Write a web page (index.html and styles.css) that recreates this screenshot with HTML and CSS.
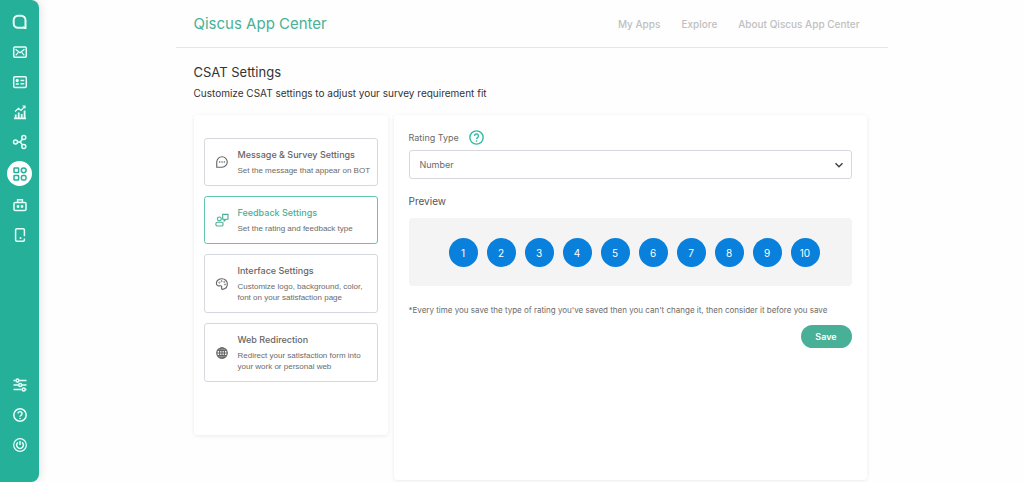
FILE: index.html
```
<!DOCTYPE html>
<html lang="en">
<head>
<meta charset="utf-8">
<meta name="viewport" content="width=device-width, initial-scale=1">
<title>Qiscus App Center</title>
<link rel="stylesheet" href="styles.css">
</head>
<body>
<div class="app">
  <nav class="sidebar" aria-label="Main">
    <div class="side-group">
      <a class="side-link" href="#" aria-label="Home"><svg viewBox="0 0 16 16"><path d="M13.500 13.800H6A4.300 4.300 0 0 1 1.700 9.500V6A4.300 4.300 0 0 1 6 1.700h3.200A4.300 4.300 0 0 1 13.500 6z" stroke-width="2"/><path d="M11 13l3 1.700" stroke-width="1.500"/></svg></a>
      <a class="side-link" href="#" aria-label="Inbox"><svg viewBox="0 0 16 16"><rect x="1.700" y="3" width="12.600" height="10.300" rx="1.200"/><path d="M3.500 5.200L8 8.800l4.500-3.600M3.700 11.300l2.600-3M12.300 11.300l-2.600-3" stroke-width="1.200"/></svg></a>
      <a class="side-link" href="#" aria-label="Contacts"><svg viewBox="0 0 16 16"><rect x="1.700" y="2.800" width="12.600" height="10.600" rx="1.200"/><circle cx="5.200" cy="6.500" r=".9" fill="currentColor"/><path d="M3.800 10h3M8.500 6.400h3.700M8.500 9.700h3.700" stroke-width="1.500"/></svg></a>
      <a class="side-link" href="#" aria-label="Analytics"><svg viewBox="0 0 16 16"><path d="M2 14.300h12M3.700 14v-3.500M6.700 14V8.500M9.700 14v-4M12.600 14V6.500" stroke-width="1.800"/><path d="M3 7.500l3.500-3.200L9 6.500l4-4.300M10.500 2H13v2.500" stroke-width="1.200"/></svg></a>
      <a class="side-link" href="#" aria-label="Integration"><svg viewBox="0 0 16 16"><circle cx="3.500" cy="8" r="2"/><circle cx="11.800" cy="3.600" r="2"/><circle cx="11.800" cy="12.400" r="2"/><path d="M5.500 8h2.700l2.200-2.800M8.200 8l2.200 2.800"/></svg></a>
      <a class="side-link side-link-active" href="#" aria-label="App Center" aria-current="page"><svg viewBox="0 0 16 16"><rect x="2" y="2" width="4.600" height="4.600" rx=".6"/><circle cx="11.700" cy="4.300" r="2.400"/><rect x="2" y="9.400" width="4.600" height="4.600" rx=".6"/><rect x="9.400" y="9.400" width="4.600" height="4.600" rx="1.600"/></svg></a>
      <a class="side-link" href="#" aria-label="Bot"><svg viewBox="0 0 16 16"><rect x="2" y="5.400" width="12" height="8" rx="1.200"/><path d="M5.600 5V2.800h4.800V5"/><path d="M5 8.400h2v2H5zM9 8.400h2v2H9z" fill="currentColor" stroke-width=".6"/></svg></a>
      <a class="side-link" href="#" aria-label="Mobile"><svg viewBox="0 0 16 16"><path d="M12.400 9.200V3a1.200 1.200 0 0 0-1.200-1.200H4.800A1.200 1.200 0 0 0 3.600 3v10a1.200 1.200 0 0 0 1.200 1.200h6.400a1.200 1.200 0 0 0 1.200-1.200v-1.500"/><circle cx="8.500" cy="11" r="1" fill="currentColor" stroke="none"/></svg></a>
    </div>
    <div class="side-group">
      <a class="side-link" href="#" aria-label="Settings"><svg viewBox="0 0 16 16"><path d="M1.500 3.600h2M7.500 3.600h7M1.500 8h4.500M10 8h4.500M1.500 12.400h8M13.500 12.400h1"/><circle cx="5.500" cy="3.600" r="1.500"/><circle cx="8.200" cy="8" r="1.500"/><circle cx="11.700" cy="12.400" r="1.500"/></svg></a>
      <a class="side-link" href="#" aria-label="Help"><svg viewBox="0 0 16 16"><circle cx="8" cy="8" r="6.200"/><path d="M6 6.500a2 2 0 1 1 3 1.800c-.7.400-1 .7-1 1.400"/><circle cx="8" cy="11.500" r=".8" fill="currentColor" stroke="none"/></svg></a>
      <a class="side-link" href="#" aria-label="Log out"><svg viewBox="0 0 16 16"><circle cx="8" cy="8" r="6.300" stroke-width="1.200"/><path d="M6 5.300a3.400 3.400 0 1 0 4 0M8 4v4"/></svg></a>
    </div>
  </nav>

  <main class="page">
    <header class="topbar">
      <a class="brand" href="#">Qiscus App Center</a>
      <nav class="topnav" aria-label="App Center">
        <a href="#">My Apps</a>
        <a href="#">Explore</a>
        <a href="#">About Qiscus App Center</a>
      </nav>
    </header>

    <div class="content">
      <h1 class="title">CSAT Settings</h1>
      <p class="subtitle">Customize CSAT settings to adjust your survey requirement fit</p>

      <div class="columns">
        <nav class="panel menu" aria-label="CSAT settings">
          <a class="card" href="#">
            <svg class="card-icon" viewBox="0 0 16 16"><path d="M2 14V8a6 6 0 1 1 6 6z"/><path d="M4.700 8H6M7.400 8h1.300M10 8h1.300" stroke-width="1.500"/></svg>
            <span class="card-body"><span class="card-title">Message &amp; Survey Settings</span><span class="card-text">Set the message that appear on BOT</span></span>
          </a>
          <a class="card card-active" href="#" aria-current="true">
            <svg class="card-icon" viewBox="0 0 16 16"><circle cx="5" cy="6.800" r="2.200"/><rect x="1" y="10.600" width="8.200" height="4.200" rx="1.800"/><path d="M8.800 1.500h6v5.700h-2.500l-1.800 2v-2H8.800z"/></svg>
            <span class="card-body"><span class="card-title">Feedback Settings</span><span class="card-text">Set the rating and feedback type</span></span>
          </a>
          <a class="card" href="#">
            <svg class="card-icon" viewBox="0 0 16 16"><path d="M8.500 14.200c3.200-.4 5.600-3 5.600-6.200C14.100 4.600 11.400 2 8 2S1.600 4.200 1.600 7c0 2.300 1.700 3.500 3.600 3.100 1.700-.4 2.800.2 2.400 1.900-.2 1 0 2.300.9 2.200z"/><g stroke-width=".8"><circle cx="5" cy="6.500" r=".7"/><circle cx="7.500" cy="4.700" r=".7"/><circle cx="10.600" cy="5.600" r=".7"/><circle cx="11.400" cy="8.600" r=".7"/></g></svg>
            <span class="card-body"><span class="card-title">Interface Settings</span><span class="card-text">Customize logo, background, color, font on your satisfaction page</span></span>
          </a>
          <a class="card" href="#">
            <svg class="card-icon card-icon-bold" viewBox="0 0 16 16"><circle cx="8" cy="8" r="6"/><ellipse cx="8" cy="8" rx="2.800" ry="6"/><path d="M2 8h12M8 2v12M3 5h10M3 11h10"/></svg>
            <span class="card-body"><span class="card-title">Web Redirection</span><span class="card-text">Redirect your satisfaction form into your work or personal web</span></span>
          </a>
        </nav>

        <form class="panel form">
          <div class="label-row">
            <label for="rating-type">Rating Type</label>
            <button class="help" type="button" aria-label="About rating type"><svg viewBox="0 0 16 16"><circle cx="8" cy="8" r="7.100"/><path d="M5.900 6.300a2.100 2.100 0 1 1 3.200 1.800c-.8.500-1.100.8-1.100 1.600"/><circle cx="8" cy="11.700" r=".9" fill="currentColor" stroke="none"/></svg></button>
          </div>
          <div class="select-wrap">
            <select id="rating-type" class="select"><option>Number</option></select>
            <svg class="chevron" viewBox="0 0 10 10"><path d="M1.500 3.200L5 6.700l3.500-3.500"/></svg>
          </div>
          <h2 class="preview-title">Preview</h2>
          <div class="preview">
            <button class="rate" type="button">1</button>
            <button class="rate" type="button">2</button>
            <button class="rate" type="button">3</button>
            <button class="rate" type="button">4</button>
            <button class="rate" type="button">5</button>
            <button class="rate" type="button">6</button>
            <button class="rate" type="button">7</button>
            <button class="rate" type="button">8</button>
            <button class="rate" type="button">9</button>
            <button class="rate" type="button">10</button>
          </div>
          <p class="note">*Every time you save the type of rating you've saved then you can't change it, then consider it before you save</p>
          <button class="save" type="submit">Save</button>
        </form>
      </div>
    </div>
  </main>
</div>
</body>
</html>
```
FILE: styles.css
```
* {
  box-sizing: border-box;
}

body {
  margin: 0;
  background: #fefefe;
  color: #333;
  font-family: Inter, "Liberation Sans", sans-serif;
}

a {
  color: inherit;
  text-decoration: none;
}

button,
select {
  font-family: inherit;
}

svg {
  fill: none;
  stroke: currentColor;
  stroke-width: 1.5;
}

.app {
  display: flex;
  min-height: 100vh;
}

.sidebar {
  display: flex;
  flex: none;
  flex-direction: column;
  justify-content: space-between;
  width: 39px;
  padding: 10px 0 25px;
  border-radius: 0 8px 8px 0;
  background: #24b099;
  box-shadow: 1px 0 8px rgba(0, 0, 0, 0.12);
  color: #e9fffa;
}

.side-group {
  display: flex;
  flex-direction: column;
  align-items: center;
  gap: 6px;
}

.side-link {
  display: grid;
  place-items: center;
  width: 25px;
  height: 24px;
}

.side-link svg {
  width: 16px;
  height: 16px;
}

.side-link-active {
  height: 25px;
  margin: 1px 0;
  border-radius: 50%;
  background: #fff;
  color: #24b099;
}

.page {
  flex: 1;
  max-width: 712px;
  margin: 0 auto;
}

.topbar {
  display: flex;
  align-items: center;
  justify-content: space-between;
  height: 48px;
  padding: 0 28px 0 18px;
  border-bottom: 1px solid #e6e6e6;
}

.brand {
  color: #48b197;
  font-size: 15px;
  font-weight: 400;
}

.topnav {
  display: flex;
  gap: 21px;
  color: #c0c0c0;
  font-size: 10px;
  font-weight: 500;
}

.content {
  padding: 16px 21px 2px 18px;
}

.title {
  margin: 0 0 5px;
  font-size: 13px;
  font-weight: 400;
  line-height: 16px;
}

.subtitle {
  margin: 0 0 14px;
  font-size: 10px;
  font-weight: 400;
  line-height: 16px;
}

.columns {
  display: grid;
  grid-template-columns: 194px minmax(0, 1fr);
  align-items: start;
  gap: 6px;
}

.panel {
  border-radius: 4px;
  background: #fff;
  box-shadow: 0 1px 4px rgba(0, 0, 0, 0.08);
}

.menu {
  display: grid;
  gap: 10px;
  min-height: 320px;
  align-content: start;
  padding: 23px 10px;
}

.card {
  display: flex;
  align-items: center;
  gap: 9px;
  padding: 9px 4px 9px 10px;
  border: 1px solid #d5d9dd;
  border-radius: 3px;
  color: #666;
}

.card-active {
  border-color: #62c6ae;
  color: #48b197;
}

.card-icon {
  flex: none;
  width: 14px;
  height: 14px;
  stroke-width: 1.3;
}

.card-icon-bold {
  stroke-width: 1.4;
}

.card-body {
  display: grid;
  gap: 3px;
}

.card-title {
  font-size: 9px;
  font-weight: 500;
  line-height: 14px;
}

.card-text {
  color: #6b6b6b;
  font-family: "Liberation Sans", sans-serif;
  font-size: 8px;
  line-height: 11px;
}

.form {
  display: flex;
  flex-direction: column;
  min-height: 365px;
  padding: 15px;
}

.label-row {
  display: flex;
  align-items: center;
  gap: 10px;
  height: 15px;
  margin-bottom: 5px;
  color: #6b6b6b;
  font-size: 9px;
}

.help {
  display: grid;
  padding: 0;
  border: 0;
  background: none;
  color: #35b99f;
}

.help svg {
  width: 15px;
  height: 15px;
}

.select-wrap {
  display: grid;
  align-items: center;
}

.select {
  grid-area: 1 / 1;
  width: 100%;
  height: 29px;
  padding: 0 10px;
  appearance: none;
  border: 1px solid #d5d9dd;
  border-radius: 3px;
  background: #fff;
  color: #6b6b6b;
  font-size: 9px;
}

.chevron {
  grid-area: 1 / 1;
  justify-self: end;
  width: 10px;
  height: 10px;
  margin-right: 8px;
  color: #444;
  pointer-events: none;
}

.preview-title {
  margin: 14px 0 9px;
  color: #555;
  font-size: 10px;
  font-weight: 400;
  line-height: 16px;
}

.preview {
  display: flex;
  flex-wrap: wrap;
  justify-content: center;
  gap: 9px;
  padding: 20px 32px 19px 40px;
  border-radius: 4px;
  background: #f4f4f4;
}

.rate {
  width: 29px;
  height: 29px;
  padding: 0;
  border: 0;
  border-radius: 50%;
  background: #0880dc;
  color: #fff;
  font-size: 10px;
}

.note {
  margin: 18px 0 9px;
  color: #6b6b6b;
  font-size: 8px;
  line-height: 12px;
}

.save {
  align-self: flex-end;
  width: 51px;
  height: 23px;
  padding: 0;
  border: 0;
  border-radius: 12px;
  background: #48b097;
  color: #fff;
  font-size: 9px;
  font-weight: 600;
}
```
